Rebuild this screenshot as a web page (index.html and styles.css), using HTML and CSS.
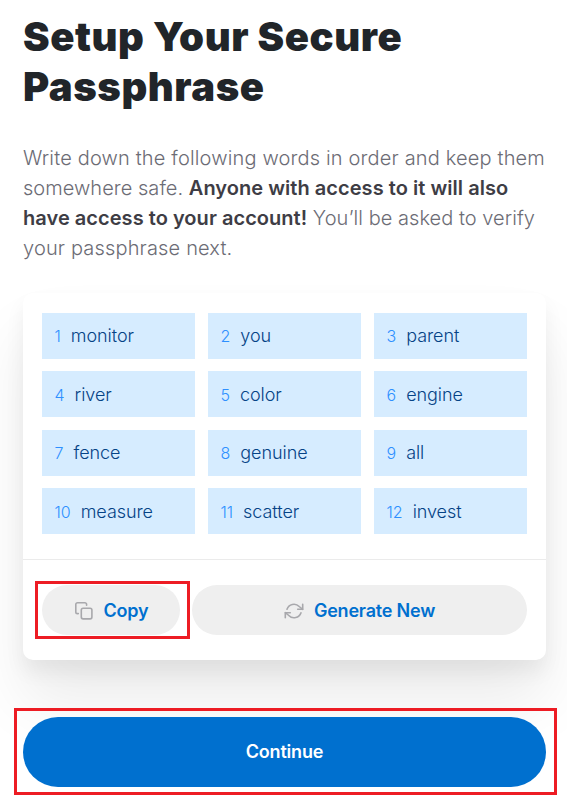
FILE: index.html
```html
<!DOCTYPE html>
<html lang="en">
<head>
<meta charset="utf-8">
<title>Setup Your Secure Passphrase</title>
<link rel="stylesheet" href="styles.css">
</head>
<body>
<main class="page">
  <h1 class="title">Setup Your Secure<br>Passphrase</h1>
  <p class="intro"><span class="wide">Write down the following words in order and keep them</span><br>somewhere safe. <strong>Anyone with access to it will also</strong><br><strong>have access to your account!</strong> You’ll be asked to verify<br><span class="wide">your passphrase next.</span></p>
  <section class="card">
    <ol class="words">
      <li class="word"><span class="num">1</span><span>monitor</span></li>
      <li class="word"><span class="num">2</span><span>you</span></li>
      <li class="word"><span class="num">3</span><span>parent</span></li>
      <li class="word low"><span class="num">4</span><span>river</span></li>
      <li class="word low"><span class="num">5</span><span>color</span></li>
      <li class="word low"><span class="num">6</span><span>engine</span></li>
      <li class="word"><span class="num">7</span><span>fence</span></li>
      <li class="word"><span class="num">8</span><span>genuine</span></li>
      <li class="word"><span class="num">9</span><span>all</span></li>
      <li class="word low"><span class="num">10</span><span>measure</span></li>
      <li class="word low"><span class="num">11</span><span>scatter</span></li>
      <li class="word low"><span class="num">12</span><span>invest</span></li>
    </ol>
    <div class="actions">
      <div class="copy-wrap">
        <button class="btn" type="button">
          <svg class="icon" viewBox="0 0 20 20"><rect x="7.3" y="7.3" width="10.6" height="10.6" rx="1.8"/><path d="M4.3 12.6h-.8a1.7 1.7 0 0 1-1.7-1.7V3.5a1.7 1.7 0 0 1 1.7-1.7h7.4a1.7 1.7 0 0 1 1.7 1.7v.8"/></svg>
          <span>Copy</span>
        </button>
      </div>
      <button class="btn" type="button">
        <svg class="icon" viewBox="0 0 20 20"><path d="M18.7 3.3v5h-5"/><path d="M1.3 16.7v-5h5"/><path d="M3 8.3a7.3 7.3 0 0 1 12.2-2.8l3.5 2.8M1.3 11.7l3.5 2.8A7.3 7.3 0 0 0 17 11.7"/></svg>
        <span>Generate New</span>
      </button>
    </div>
  </section>
  <div class="continue-wrap">
    <button class="continue" type="button">Continue</button>
  </div>
</main>
</body>
</html>
```
FILE: styles.css
```css
* { box-sizing: border-box; }
body {
  margin: 0;
  background: #fff;
  font-family: Inter, "Liberation Sans", sans-serif;
  overflow: hidden;
}
.page { height: 812px; padding: 12px 21px 0 23px; }
.title {
  margin: 0;
  font-size: 40px;
  line-height: 50px;
  font-weight: 900;
  letter-spacing: .56px;
  color: #212529;
  white-space: nowrap;
}
.intro {
  margin: 31px 0 0;
  font-size: 20px;
  line-height: 30px;
  font-weight: 300;
  letter-spacing: .04px;
  color: #6c6c75;
  white-space: nowrap;
}
.wide { letter-spacing: .16px; }
.intro strong { font-weight: 600; color: #3e3d45; }
.card {
  margin-top: 30px;
  height: 367px;
  border-radius: 10px;
  background: #fff;
  box-shadow: 0 12px 20px rgba(0, 0, 0, .06), 0 42px 62px rgba(0, 0, 0, .08);
}
.words {
  list-style: none;
  margin: 0;
  padding: 20px 19px 25px;
  display: grid;
  grid-template-columns: repeat(3, 153px);
  grid-auto-rows: 46px;
  column-gap: 13px;
  row-gap: 12.4px;
}
.word {
  display: flex;
  align-items: baseline;
  gap: 10px;
  padding-left: 12.5px;
  background: #d6ecff;
  color: #054386;
  font-size: 18px;
  line-height: 46px;
  font-weight: 350;
  letter-spacing: -.06px;
}
.low { line-height: 48px; }
.num { font-size: 16px; font-weight: 300; letter-spacing: 0; color: #2e90ff; }
.actions {
  border-top: 1px solid #ebebeb;
  padding: 21px 19px 0 12px;
  display: grid;
  grid-template-columns: 155px 335px;
  gap: 2px;
  align-items: center;
}
.copy-wrap { border: 3px solid #ed1c24; height: 58px; padding: 1px 7px 0 4px; }
.btn {
  width: 100%;
  height: 50px;
  border: 0;
  border-radius: 25px;
  padding: 2px 0 0;
  background: #efefef;
  color: #0070cf;
  font: 600 18px/48px Inter, "Liberation Sans", sans-serif;
  letter-spacing: -.2px;
  display: flex;
  align-items: center;
  justify-content: center;
  gap: 10px;
}
.icon {
  width: 20px;
  height: 20px;
  fill: none;
  stroke: #a8a8ac;
  stroke-width: 1.6;
  stroke-linecap: round;
  stroke-linejoin: round;
}
.continue-wrap {
  margin: 48px -11px 0 -9px;
  height: 87px;
  border: 3px solid #ed1c24;
  padding: 6px 8px 0 6px;
}
.continue {
  width: 100%;
  height: 70px;
  border: 0;
  border-radius: 35px;
  padding: 0 0 1px;
  background: #0070cf;
  color: #fff;
  font: 600 18px/68px Inter, "Liberation Sans", sans-serif;
  letter-spacing: -.2px;
}
```
